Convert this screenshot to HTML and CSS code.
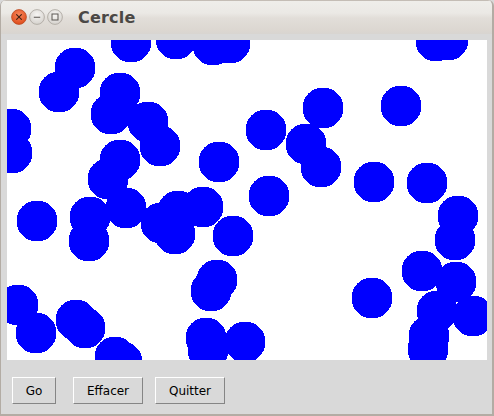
FILE: index.html
```html
<!DOCTYPE html>
<html lang="fr">
<head>
<meta charset="utf-8">
<title>Cercle</title>
<link rel="stylesheet" href="styles.css">
</head>
<body>
<div class="window">
  <div class="titlebar">
    <div class="controls">
      <svg class="ctl" width="16" height="16" viewBox="0 0 16 16">
        <defs>
          <radialGradient id="gclose" cx="50%" cy="35%" r="60%">
            <stop offset="0" stop-color="#f8875c"/>
            <stop offset="1" stop-color="#e0501f"/>
          </radialGradient>
        </defs>
        <circle cx="8" cy="8" r="7.4" fill="url(#gclose)" stroke="#b94a22" stroke-width="0.8"/>
        <path d="M5.6 5.6 L10.4 10.4 M10.4 5.6 L5.6 10.4" stroke="#4a2414" stroke-width="1.2" stroke-linecap="round"/>
      </svg>
      <svg class="ctl" width="16" height="16" viewBox="0 0 16 16">
        <defs>
          <radialGradient id="ggrey" cx="50%" cy="35%" r="60%">
            <stop offset="0" stop-color="#f6f5f3"/>
            <stop offset="1" stop-color="#d8d5d0"/>
          </radialGradient>
        </defs>
        <circle cx="8" cy="8" r="7.4" fill="url(#ggrey)" stroke="#aaa49d" stroke-width="0.8"/>
        <path d="M4.8 8.2 H11.2" stroke="#5a5652" stroke-width="1.1"/>
      </svg>
      <svg class="ctl" width="16" height="16" viewBox="0 0 16 16">
        <circle cx="8" cy="8" r="7.4" fill="url(#ggrey)" stroke="#aaa49d" stroke-width="0.8"/>
        <rect x="5" y="5" width="6" height="6" fill="none" stroke="#5a5652" stroke-width="1"/>
      </svg>
    </div>
    <span class="title">Cercle</span>
  </div>
  <div class="client">
    <svg class="canvas" width="480" height="320" viewBox="7 40 480 320" shape-rendering="crispEdges">
      <g fill="#0000ff">
        <circle cx="131" cy="42" r="20.5"/>
        <circle cx="176" cy="39" r="20.5"/>
        <circle cx="213" cy="45" r="20.5"/>
        <circle cx="230" cy="43" r="20.5"/>
        <circle cx="436" cy="41" r="20.5"/>
        <circle cx="448" cy="40" r="20.5"/>
        <circle cx="75" cy="68" r="20.5"/>
        <circle cx="59" cy="92" r="20.5"/>
        <circle cx="120" cy="93" r="20.5"/>
        <circle cx="111" cy="114" r="20.5"/>
        <circle cx="148" cy="122" r="20.5"/>
        <circle cx="160" cy="146" r="20.5"/>
        <circle cx="11" cy="129" r="20.5"/>
        <circle cx="12" cy="153" r="20.5"/>
        <circle cx="120" cy="160" r="20.5"/>
        <circle cx="108" cy="179" r="20.5"/>
        <circle cx="219" cy="162" r="20.5"/>
        <circle cx="323" cy="108" r="20.5"/>
        <circle cx="401" cy="106" r="20.5"/>
        <circle cx="266" cy="130" r="20.5"/>
        <circle cx="306" cy="144" r="20.5"/>
        <circle cx="321" cy="167" r="20.5"/>
        <circle cx="374" cy="182" r="20.5"/>
        <circle cx="427" cy="183" r="20.5"/>
        <circle cx="269" cy="196" r="20.5"/>
        <circle cx="37" cy="221" r="20.5"/>
        <circle cx="90" cy="217" r="20.5"/>
        <circle cx="89" cy="241" r="20.5"/>
        <circle cx="126" cy="208" r="20.5"/>
        <circle cx="161" cy="223" r="20.5"/>
        <circle cx="178" cy="211" r="20.5"/>
        <circle cx="175" cy="234" r="20.5"/>
        <circle cx="203" cy="207" r="20.5"/>
        <circle cx="233" cy="236" r="20.5"/>
        <circle cx="217" cy="280" r="20.5"/>
        <circle cx="211" cy="291" r="20.5"/>
        <circle cx="18" cy="305" r="20.5"/>
        <circle cx="36" cy="333" r="20.5"/>
        <circle cx="76" cy="320" r="20.5"/>
        <circle cx="85" cy="328" r="20.5"/>
        <circle cx="115" cy="357" r="20.5"/>
        <circle cx="122" cy="362" r="20.5"/>
        <circle cx="206" cy="338" r="20.5"/>
        <circle cx="208" cy="350" r="20.5"/>
        <circle cx="245" cy="342" r="20.5"/>
        <circle cx="458" cy="216" r="20.5"/>
        <circle cx="455" cy="240" r="20.5"/>
        <circle cx="422" cy="271" r="20.5"/>
        <circle cx="456" cy="282" r="20.5"/>
        <circle cx="372" cy="298" r="20.5"/>
        <circle cx="437" cy="311" r="20.5"/>
        <circle cx="473" cy="316" r="20.5"/>
        <circle cx="429" cy="336" r="20.5"/>
        <circle cx="428" cy="349" r="20.5"/>
      </g>
    </svg>
    <div class="buttons">
      <button class="btn btn-go">Go</button>
      <button class="btn btn-wide">Effacer</button>
      <button class="btn btn-wide">Quitter</button>
    </div>
  </div>
</div>
</body>
</html>
```

FILE: styles.css
```css
html, body {
  margin: 0;
  padding: 0;
  background: #d9d9d9;
}

.window {
  width: 494px;
  height: 416px;
  box-sizing: border-box;
  display: flex;
  flex-direction: column;
  border: 1px solid #b3aca4;
  border-top: none;
  border-bottom-width: 2px;
  border-right-width: 2px;
  border-radius: 6px 6px 0 0;
  overflow: hidden;
  background: #d9d9d9;
}

.titlebar {
  height: 34px;
  flex: none;
  display: flex;
  align-items: center;
  box-shadow: inset 0 1px 0 #c4bdb5;
  background: linear-gradient(#efeeea 0, #ebe9e5 13px, #e2ded9 18px, #dcd7d1 30px, #d8d5d1 34px);
}

.controls {
  display: flex;
  gap: 2px;
  margin-left: 10px;
  margin-top: 0;
}

.ctl {
  display: block;
}

.title {
  margin-left: 15px;
  font-family: "DejaVu Sans", "Noto Sans", sans-serif;
  font-weight: bold;
  font-size: 16px;
  color: #4b4845;
  letter-spacing: 0.2px;
}

.client {
  flex: 1;
  display: flex;
  flex-direction: column;
  padding: 6px 5px 0 6px;
}

.canvas {
  display: block;
  background: #ffffff;
}

.buttons {
  display: flex;
  margin-top: 17px;
  padding-left: 5px;
}

.btn {
  height: 27px;
  box-sizing: border-box;
  background: #d9d9d9;
  border: 1px solid;
  border-color: #ffffff #858585 #858585 #ffffff;
  border-radius: 0;
  padding: 0;
  font-family: "DejaVu Sans", sans-serif;
  font-size: 12px;
  color: #000000;
  margin: 0;
}

.btn-go {
  width: 44px;
  margin-right: 17px;
}

.btn-wide {
  width: 70px;
  margin-right: 12px;
}
```
